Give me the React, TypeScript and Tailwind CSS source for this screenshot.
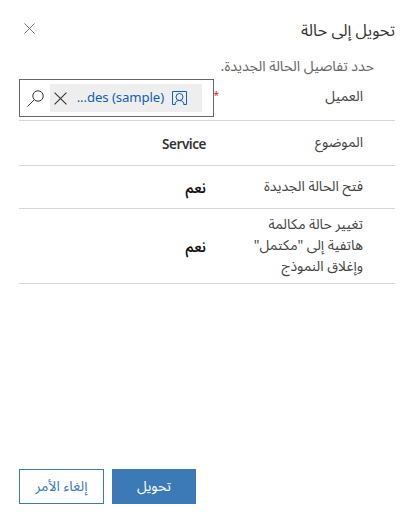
import type { ReactNode } from "react";

const Cross = ({ className }: { className: string }) => (
  <svg className={className} viewBox="0 0 12 12" fill="none" stroke="currentColor" strokeWidth="1">
    <path d="M.5.5l11 11M11.5.5l-11 11" />
  </svg>
);

function Row({ label, height, children }: { label: ReactNode; height: string; children: ReactNode }) {
  return (
    <div className={`flex items-center border-b border-[#d6d6d6] ps-8 ${height}`}>
      <div className="w-[157px] shrink-0 pb-[2px] whitespace-nowrap text-[14px] leading-[21px] text-[#444]">{label}</div>
      <div className="pt-[3px] text-sm font-semibold text-[#111]">{children}</div>
    </div>
  );
}

export default function App() {
  return (
    <div
      dir="rtl"
      className="flex h-[526px] w-[416px] flex-col bg-white pt-[17px] pr-[21px] pb-[22px] pl-[19px] font-['Noto_Sans_Arabic','Open_Sans','DejaVu_Sans',sans-serif]"
    >
      <header className="flex h-7 items-center justify-between">
        <h1 className="whitespace-nowrap text-[16.2px] text-[#333]">تحويل إلى حالة</h1>
        <button aria-label="إغلاق" className="me-[5px] mb-[6px] text-[#666]">
          <Cross className="size-[11px]" />
        </button>
      </header>
      <p className="mt-[10px] h-[22px] whitespace-nowrap ps-[21px] text-[14.2px] leading-[22px] text-[#666]">
        حدد تفاصيل الحالة الجديدة.
      </p>
      <main>
        <div className="flex h-11 items-start border-b border-[#d6d6d6] ps-8 pt-[2px]">
          <div className="w-[144px] shrink-0 pt-[7px] text-[14px] leading-[21px] text-[#444]">العميل</div>
          <span className="w-[5px] shrink-0 pt-[7px] text-[10px] leading-5 text-[#f02020]">*</span>
          <div className="flex h-[38px] w-[195px] shrink-0 items-center border border-[#666] ps-[11px]">
            <div className="flex h-7 w-[152px] items-center bg-[#eee] ps-[15px] text-[#1160b7]">
              <svg className="size-[15px] shrink-0" viewBox="0 0 15 15" fill="none" stroke="currentColor">
                <path d="M3 13.5H.5V.5h14v13H12" />
                <circle cx="7.5" cy="6" r="3.5" />
                <path d="M3 14c0-3 1.6-4.5 4.5-4.5S12 11 12 14" />
              </svg>
              <span dir="ltr" className="mr-2 flex w-[87px] shrink-0 justify-end pt-px whitespace-nowrap text-[13.2px] tracking-[-0.1px]">...des (sample)</span>
              <Cross className="ms-[10px] size-[13px] shrink-0 text-[#333]" />
            </div>
            <svg className="ms-[6px] size-[17px] shrink-0 text-[#333]" viewBox="0 0 17 17" fill="none" stroke="currentColor">
              <circle cx="11" cy="6" r="5.2" />
              <path d="M7.2 9.8L.5 16.5" />
            </svg>
          </div>
        </div>
        <Row label="الموضوع" height="h-[45px]">
          <span className="text-[13.5px] tracking-[-0.45px] text-[#333]">Service</span>
        </Row>
        <Row label="فتح الحالة الجديدة" height="h-[43px]">نعم</Row>
        <Row
          label={<>تغيير حالة مكالمة<br />هاتفية إلى "مكتمل"<br />وإغلاق النموذج</>}
          height="h-[75px]"
        >
          نعم
        </Row>
      </main>
      <footer className="mt-auto flex justify-end gap-2 text-[14px]">
        <button className="h-[35px] w-[84px] bg-[#3b79b7] text-white">تحويل</button>
        <button className="h-[35px] w-[85px] whitespace-nowrap border border-[#3b79b7] text-[#3b79b7]">إلغاء الأمر</button>
      </footer>
    </div>
  );
}
